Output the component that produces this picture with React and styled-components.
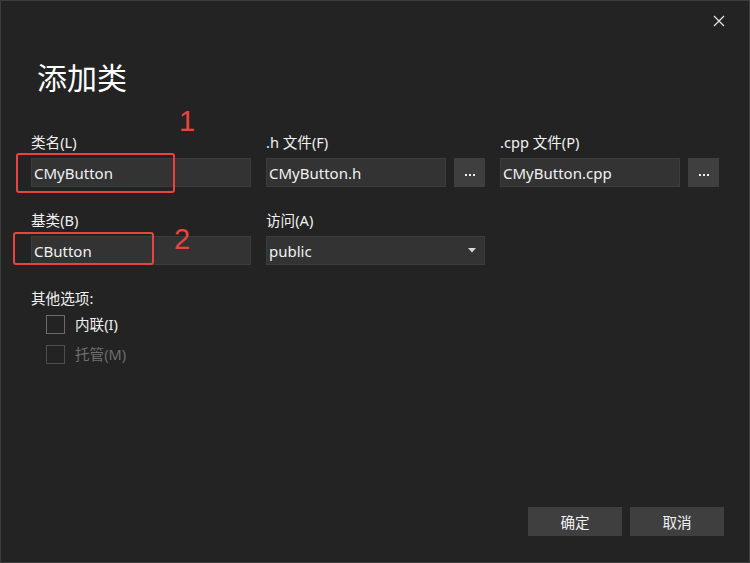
import styled, { createGlobalStyle } from "styled-components";

const GlobalStyle = createGlobalStyle`
  html, body {
    margin: 0;
    padding: 0;
    background: #232323;
  }
  * {
    box-sizing: border-box;
  }
`;

const Dialog = styled.div`
  position: relative;
  width: 750px;
  height: 563px;
  background-color: #232323;
  border: 1px solid #3d3d3d;
  display: flex;
  flex-direction: column;
  padding: 56px 25px 26px 30px;
  font-family: "Noto Sans", "Noto Sans CJK SC", sans-serif;
  color: #f1f1f1;
`;

const CloseButton = styled.button`
  position: absolute;
  top: 12px;
  right: 22px;
  width: 16px;
  height: 16px;
  padding: 0;
  border: none;
  background: transparent;
  display: flex;
  align-items: center;
  justify-content: center;
`;

const Title = styled.h1`
  margin: 0 0 0 6px;
  font-family: "Noto Sans CJK SC", sans-serif;
  font-weight: 400;
  font-size: 30px;
  line-height: 38px;
  color: #ffffff;
`;

const Form = styled.div`
  display: grid;
  grid-template-columns: 220px 219px 219px;
  column-gap: 15px;
  row-gap: 23px;
  margin-top: 37px;
`;

const Field = styled.div`
  display: flex;
  flex-direction: column;
  gap: 6px;
`;

const Label = styled.label`
  font-family: "Noto Sans", "Noto Sans CJK SC", sans-serif;
  font-size: 14.6px;
  line-height: 20px;
  color: ${(p) => (p.$disabled ? "#6e6e6e" : "#f1f1f1")};
`;

const InputRow = styled.div`
  position: relative;
  display: flex;
  gap: 8px;
  height: 29px;
`;

const TextBox = styled.div`
  flex: 1;
  display: flex;
  align-items: center;
  padding: 0 2px;
  background-color: #333333;
  border: 1px solid #3c3c3c;
  font-size: 15px;
  color: #f1f1f1;
  white-space: nowrap;
`;

const Select = styled(TextBox)`
  justify-content: space-between;
  padding-right: 8px;
`;

const BrowseButton = styled.div`
  width: 31px;
  background-color: #3f3f3f;
  display: flex;
  align-items: center;
  justify-content: center;
  gap: 2px;
  padding-top: 4px;
`;

const Dot = styled.span`
  width: 2px;
  height: 2px;
  background-color: #f1f1f1;
`;

const Mark = styled.div`
  position: absolute;
  left: ${(p) => p.$left}px;
  top: ${(p) => p.$top}px;
  width: ${(p) => p.$w}px;
  height: ${(p) => p.$h}px;
  border: 2.6px solid #e8463c;
  border-radius: 3px;
  pointer-events: none;
`;

const MarkNumber = styled.span`
  position: absolute;
  left: ${(p) => p.$left}px;
  top: ${(p) => p.$top}px;
  font-family: "Liberation Sans", sans-serif;
  font-size: 29px;
  line-height: 32px;
  color: #e8463c;
`;

const Options = styled.div`
  display: flex;
  flex-direction: column;
  gap: 6px;
  margin-top: 23px;
`;

const CheckList = styled.div`
  display: flex;
  flex-direction: column;
  gap: 10px;
  padding-left: 15px;
`;

const CheckRow = styled.div`
  display: flex;
  align-items: center;
  gap: 10px;
  height: 20px;
`;

const CheckBox = styled.span`
  width: 19px;
  height: 19px;
  border: 1px solid ${(p) => (p.$disabled ? "#4e4e4e" : "#6a6a6a")};
`;

const Footer = styled.div`
  margin-top: auto;
  display: flex;
  justify-content: flex-end;
  gap: 8px;
`;

const Button = styled.button`
  width: 94px;
  height: 29px;
  border: none;
  background-color: #3f3f3f;
  color: #f1f1f1;
  font-family: "Noto Sans CJK SC", sans-serif;
  font-size: 14.6px;
  padding: 0;
`;

const Browse = () => (
  <BrowseButton>
    <Dot />
    <Dot />
    <Dot />
  </BrowseButton>
);

const App = () => {
  return (
    <>
      <GlobalStyle />
      <Dialog>
        <CloseButton>
          <svg width="12" height="12" viewBox="0 0 12 12">
            <path d="M1 1L11 11M11 1L1 11" stroke="#e0e0e0" strokeWidth="1.3" />
          </svg>
        </CloseButton>
        <Title>添加类</Title>
        <Form>
          <Field>
            <Label>类名(L)</Label>
            <InputRow>
              <TextBox>CMyButton</TextBox>
              <Mark $left={-15} $top={-5} $w={159} $h={40} />
              <MarkNumber $left={148} $top={-53}>1</MarkNumber>
            </InputRow>
          </Field>
          <Field>
            <Label>.h 文件(F)</Label>
            <InputRow>
              <TextBox>CMyButton.h</TextBox>
              <Browse />
            </InputRow>
          </Field>
          <Field>
            <Label>.cpp 文件(P)</Label>
            <InputRow>
              <TextBox>CMyButton.cpp</TextBox>
              <Browse />
            </InputRow>
          </Field>
          <Field>
            <Label>基类(B)</Label>
            <InputRow>
              <TextBox>CButton</TextBox>
              <Mark $left={-18} $top={-4} $w={141} $h={33} />
              <MarkNumber $left={143} $top={-13}>2</MarkNumber>
            </InputRow>
          </Field>
          <Field>
            <Label>访问(A)</Label>
            <InputRow>
              <Select>
                public
                <svg width="8" height="5" viewBox="0 0 8 5">
                  <path d="M0 0H8L4 4.5Z" fill="#d8d8d8" />
                </svg>
              </Select>
            </InputRow>
          </Field>
        </Form>
        <Options>
          <Label>其他选项:</Label>
          <CheckList>
            <CheckRow>
              <CheckBox />
              <Label>内联(I)</Label>
            </CheckRow>
            <CheckRow>
              <CheckBox $disabled />
              <Label $disabled>托管(M)</Label>
            </CheckRow>
          </CheckList>
        </Options>
        <Footer>
          <Button>确定</Button>
          <Button>取消</Button>
        </Footer>
      </Dialog>
    </>
  );
};

export default App;
